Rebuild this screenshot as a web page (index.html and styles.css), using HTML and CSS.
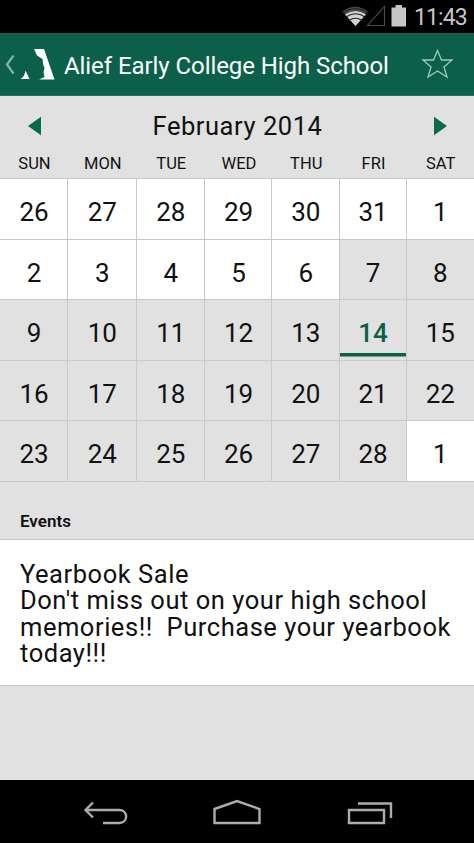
FILE: index.html
```html
<!DOCTYPE html>
<html lang="en">
<head>
<meta charset="utf-8">
<title>Alief Early College High School</title>
<link rel="stylesheet" href="styles.css">
</head>
<body>
<div class="status">
  <svg width="66" height="33" viewBox="342 0 66 33">
    <path d="M342.500 11.500Q355 2 368 11.500L355.500 26Z" fill="#4a4a4a"/>
    <path d="M345 14.500Q355.500 7.500 366 14.500L355.500 26Z" fill="#d0d0d0"/>
    <path d="M343 13Q355.500 4.500 368 13M346 17Q355.500 10.500 365 17M349 20.500Q355.500 16 362 20.500" fill="none" stroke="#222" stroke-width="1.100"/>
    <path d="M367.500 25.500H384.500V6.500Z" fill="none" stroke="#4b4b4b" stroke-width="1.100"/>
    <path d="M391.500 7.500h4V5h6.500v2.500h4V26.500h-14.500Z" fill="#c6c6c6"/>
  </svg>
  <span class="clock">11:43</span>
</div>
<header class="bar">
  <svg class="logo" width="60" height="63" viewBox="0 33 60 63">
    <path d="M13.500 55.500L7 64.500L13.500 73.500" fill="none" stroke="#83b5a4" stroke-width="2.200"/>
    <path d="M25.500 70.500L29.500 79H20.500Q24.500 77 25.500 70.500Z" fill="#fff"/>
    <path d="M34 49H44L54.500 79.500H39L44.500 77L43.500 72L44.500 68L43 64L42.500 59L37 55.500Z" fill="#fff"/>
  </svg>
  <h1>Alief Early College High School</h1>
  <svg class="star" width="34" height="32" viewBox="421 49 34 32">
    <path d="M437.500 51.500L441.500 61H452L444 68L447 78L437.500 72L428 78L431 68L423 61H433.500Z" fill="none" stroke="#9fcabb" stroke-width="1.300"/>
  </svg>
</header>
<main>
  <div class="month">
    <svg width="15" height="20" viewBox="0 0 15 20"><path d="M1 10L14 .8V19.200Z" fill="#056b4b"/></svg>
    <h2>February 2014</h2>
    <svg width="15" height="20" viewBox="0 0 15 20"><path d="M14 10L1 .8V19.200Z" fill="#056b4b"/></svg>
  </div>
  <div class="days"><span>SUN</span><span>MON</span><span>TUE</span><span>WED</span><span>THU</span><span>FRI</span><span>SAT</span></div>
  <div class="grid">
    <div class="w">26</div><div class="w">27</div><div class="w">28</div><div class="w">29</div><div class="w">30</div><div class="w">31</div><div class="w">1</div>
    <div class="w">2</div><div class="w">3</div><div class="w">4</div><div class="w">5</div><div class="w">6</div><div>7</div><div>8</div>
    <div>9</div><div>10</div><div>11</div><div>12</div><div>13</div><div class="today">14</div><div>15</div>
    <div>16</div><div>17</div><div>18</div><div>19</div><div>20</div><div>21</div><div>22</div>
    <div>23</div><div>24</div><div>25</div><div>26</div><div>27</div><div>28</div><div class="w">1</div>
  </div>
  <h3>Events</h3>
  <section class="event"><div>Yearbook Sale</div><div>Don't miss out on your high school</div><div>memories!!  Purchase your yearbook</div><div>today!!!</div></section>
</main>
<nav>
  <svg width="474" height="63" viewBox="0 780 474 63" fill="none" stroke="#adadad" stroke-width="2.400">
    <path d="M93 802.500L85.500 810L93 817.500M86 810H119C128.500 810 128.500 823 119 823H103"/>
    <path d="M214.500 809L237 801L259.500 809V823H214.500Z"/>
    <path d="M349 810H384V823H349ZM358 803.500H391V818"/>
  </svg>
</nav>
</body>
</html>
```
FILE: styles.css
```css
* { box-sizing: border-box; }
body { margin: 0; width: 474px; height: 843px; display: flex; flex-direction: column; overflow: hidden; background: #e1e1e1; color: #111; font-family: Roboto, "Noto Sans", sans-serif; }
svg { display: block; flex: none; }
h1, h2, h3 { margin: 0; font-weight: 400; white-space: nowrap; }
.status { height: 33px; flex: none; background: #000; display: flex; padding-left: 342px; }
.clock { color: #c6c6c6; font-size: 23px; line-height: 33px; margin-left: 6px; padding-top: 1px; letter-spacing: -.9px; }
.bar { height: 63px; flex: none; background: #0c6049; display: flex; align-items: center; border-bottom: 1px solid #286f5a; }
.bar h1 { width: 362px; padding-left: 4px; color: #fff; font-size: 24px; line-height: 32px; padding-top: 3px; letter-spacing: -.07px; }
.star { margin-left: -1px; }
main { flex: 1; display: flex; flex-direction: column; }
.month { height: 58px; display: flex; align-items: center; justify-content: space-between; padding: 1px 26px 0 27px; }
.month h2 { font-size: 25.500px; letter-spacing: .55px; line-height: 30px; padding-top: 1px; }
.days, .grid { display: grid; grid-template-columns: 68px 68.500px 68.500px 67px 67.500px 67px 67.500px; }
.days { height: 24px; font-size: 16.500px; text-align: center; line-height: 20px; padding-left: .5px; }
.grid { grid-auto-rows: 60.600px; border-top: 1px solid #c9c9c9; font-size: 26px; text-align: center; line-height: 66px; }
.grid div { padding-left: 1px; border-right: 1px solid #c9c9c9; border-bottom: 1px solid #c9c9c9; }
.grid div:nth-child(7n) { border-right: 0; padding-left: 0; }
.grid .w { background: #fff; }
.grid .today { color: #0c6049; font-weight: 500; background: linear-gradient(#0c6049, #0c6049) 0 calc(100% - 3px) / 100% 3.500px no-repeat; }
h3 { height: 57px; padding: 27px 20px 0; font-size: 17px; line-height: 24px; font-weight: 600; }
.event { height: 147px; background: #fff; border-top: 1px solid #cacaca; border-bottom: 1px solid #cacaca; padding: 21px 20px 0; font-size: 25.500px; line-height: 26.400px; letter-spacing: .54px; white-space: pre; }
nav { height: 63px; flex: none; background: #000; }
```
